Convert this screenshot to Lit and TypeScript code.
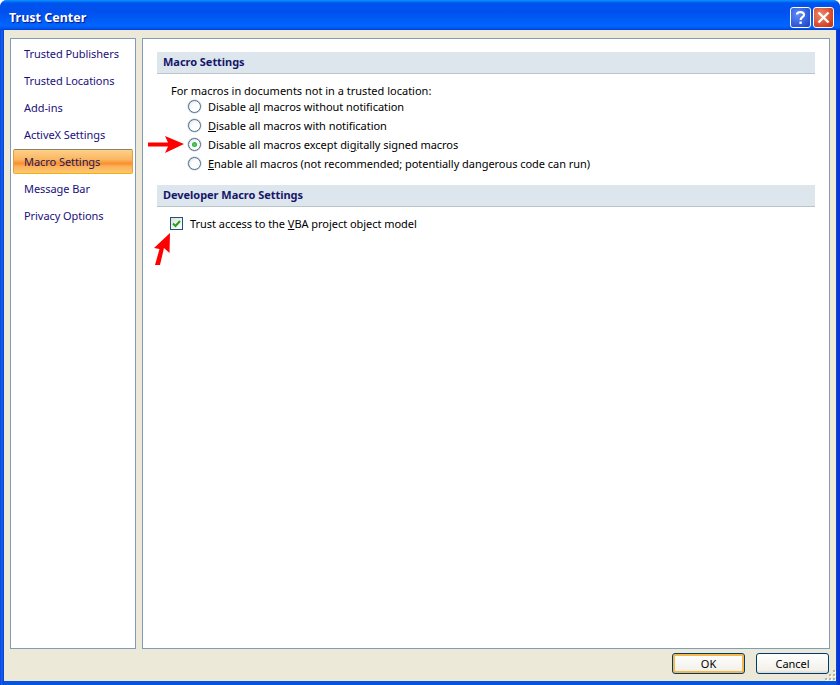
import { LitElement, html, css } from "lit";
import { customElement } from "lit/decorators.js";

const nav = ["Trusted Publishers", "Trusted Locations", "Add-ins", "ActiveX Settings", "Macro Settings", "Message Bar", "Privacy Options"];

@customElement("app-root")
export class AppRoot extends LitElement {
  static styles = css`
    :host { display: block; width: 840px; height: 685px; font-family: "Noto Sans", "DejaVu Sans", sans-serif; font-size: 11px; letter-spacing: -0.04px; color: #000; overflow: hidden; background: #fff; }
    .window { position: relative; width: 840px; height: 685px; box-sizing: border-box; display: flex; flex-direction: column; border-radius: 7px 7px 0 0; overflow: hidden;
      background: linear-gradient(90deg, #0831d9 0, #1660ee 1px, #0855dd 3px, #0a3bd0 4px, #0855dd 4px, #0855dd 836px, #0a3bd0 837px, #0831d9 840px); }
    .title { height: 30px; flex: none; box-sizing: border-box; display: flex; align-items: center; padding: 5px 6px 0 9px; gap: 2px;
      background: linear-gradient(180deg, #0997ff 0%, #0053ee 10%, #0050ee 40%, #0066ff 86%, #0058ee 94%, #003dd7 100%); }
    .title-text { flex: 1; color: #fff; font: bold 12.5px "Noto Sans", sans-serif; text-shadow: 1px 1px 1px #0f1089; letter-spacing: 0; }
    .cap { width: 21px; height: 21px; box-sizing: border-box; border: 1px solid #fff; border-radius: 3px; display: block; }
    .help { background: radial-gradient(circle at 35% 35%, #5f8cf5, #2a56d8 70%, #1c3fb4); }
    .close { background: radial-gradient(circle at 35% 35%, #ed8a6c, #d9482a 65%, #b5300f); }
    .body { flex: 1; margin: 0 4px 4px; background: #ece9d8; display: flex; flex-direction: column; padding: 8px 6px 0; min-height: 0; }
    .panels { display: flex; gap: 6px; height: 611px; flex: none; }
    .panel { background: #fff; border: 1px solid #7f9db9; box-sizing: border-box; }
    .left { width: 126px; padding-top: 1px; display: flex; flex-direction: column; }
    .nav { height: 27px; box-sizing: border-box; display: flex; align-items: center; padding-left: 11px; color: #1a0f7c; margin: 0 2px; white-space: nowrap; letter-spacing: -0.06px; }
    .nav.sel { color: #22185c; border: 1px solid; border-color: #8c8465 #e0a040 #f5b000; border-radius: 2px; height: 25px; margin: 1px 2px; padding-left: 10px;
      background: linear-gradient(180deg, #fdd08a 0%, #fbb560 42%, #f8902e 58%, #fcb158 72%, #fdc878 100%); }
    .right { flex: 1; padding: 13px 14px 0; }
    .sec { height: 22px; box-sizing: border-box; background: #dde6ec; border-bottom: 1px solid #b9c4cb; color: #15166b; font-weight: 700; padding: 0 0 2px 6px; display: flex; align-items: center; }
    .intro { margin: 9px 0 0 14px; height: 15px; line-height: 15px; letter-spacing: 0; }
    .opts { display: flex; flex-direction: column; margin: -1px 0 0 31px; }
    .opt { height: 19px; display: flex; align-items: center; gap: 7px; white-space: nowrap; }
    u { text-underline-offset: 1px; }
    .radio { width: 13px; height: 13px; flex: none; border-radius: 50%; box-sizing: border-box; border: 1px solid #4f6f8a; background: radial-gradient(circle at 65% 65%, #fff 40%, #d8dfe6 100%); display: flex; align-items: center; justify-content: center; box-shadow: 0 0 0 .5px #b8c6d2; }
    .dot { width: 5px; height: 5px; border-radius: 50%; background: radial-gradient(circle, #5fd25f, #1b9a2c); }
    .sec2 { margin-top: 12px; }
    .check-row { display: flex; align-items: center; gap: 7px; margin: 9px 0 0 13px; height: 15px; white-space: nowrap; }
    .check { width: 13px; height: 13px; flex: none; box-sizing: border-box; border: 1px solid #1c5180; background: linear-gradient(135deg, #e0e0d6, #fff); display: block; }
    .footer { flex: 1; display: flex; justify-content: flex-end; gap: 11px; padding: 4px 1px 0 0; position: relative; }
    .btn { width: 73px; height: 21px; box-sizing: border-box; border: 1px solid #003c74; border-radius: 3px; background: linear-gradient(180deg, #fff, #f2f1ea 85%, #dcd8cc); font: inherit; color: #000; padding: 0; display: flex; align-items: center; justify-content: center; }
    .btn.def { box-shadow: inset 0 0 0 2px #f5b84a; }
    .grip { position: absolute; right: -6px; bottom: 0; width: 12px; height: 12px; display: block; }
    .arrow { position: absolute; display: block; }
    .a1 { left: 148px; top: 135px; }
    .a2 { left: 153px; top: 232px; }
  `;

  render() {
    return html`<div class="window">
      <div class="title">
        <div class="title-text">Trust Center</div>
        <svg class="cap help" viewBox="0 0 19 19"><path d="M6 6.5 C6 3.5 13 3 13 6.8 C13 9.3 9.6 9.2 9.6 12" fill="none" stroke="#fff" stroke-width="2.2"/><rect x="8.4" y="13.5" width="2.4" height="2.4" fill="#fff"/></svg>
        <svg class="cap close" viewBox="0 0 19 19"><path d="M4.5 4.5 L14.5 14.5 M14.5 4.5 L4.5 14.5" stroke="#fff" stroke-width="2.4"/></svg>
      </div>
      <div class="body">
        <div class="panels">
          <div class="panel left">
            ${nav.map((n) => html`<div class="nav ${n === "Macro Settings" ? "sel" : ""}">${n}</div>`)}
          </div>
          <div class="panel right">
            <div class="sec">Macro Settings</div>
            <div class="intro">For macros in documents not in a trusted location:</div>
            <div class="opts">
              <div class="opt"><span class="radio"></span><span>Disable a<u>l</u>l macros without notification</span></div>
              <div class="opt"><span class="radio"></span><span><u>D</u>isable all macros with notification</span></div>
              <div class="opt"><span class="radio"><span class="dot"></span></span><span>Disable all macros except di<u>g</u>itally signed macros</span></div>
              <div class="opt"><span class="radio"></span><span><u>E</u>nable all macros (not recommended; potentially dangerous code can run)</span></div>
            </div>
            <div class="sec sec2">Developer Macro Settings</div>
            <div class="check-row">
              <svg class="check" viewBox="0 0 11 11"><path d="M2 5.5 L4.5 8 L9 3" fill="none" stroke="#21a121" stroke-width="2"/></svg>
              <span>Trust access to the <u>V</u>BA project object model</span>
            </div>
          </div>
        </div>
        <div class="footer">
          <div class="btn def">OK</div>
          <div class="btn">Cancel</div>
          <svg class="grip" viewBox="0 0 12 12">
            <path fill="#fff" d="M10 2h2v2h-2zM6 6h2v2h-2zM10 6h2v2h-2zM2 10h2v2h-2zM6 10h2v2h-2zM10 10h2v2h-2z"/>
            <path fill="#b8b5a3" d="M9 1h2v2h-2zM5 5h2v2h-2zM9 5h2v2h-2zM1 9h2v2h-2zM5 9h2v2h-2zM9 9h2v2h-2z"/>
          </svg>
        </div>
      </div>
      <svg class="arrow a1" width="37" height="19" viewBox="0 0 37 19"><path d="M0 7.5 L20 7.5 L17 1 L36 9 L17 18 L20 11.5 L0 11.5 Z" fill="#f00"/></svg>
      <svg class="arrow a2" width="18" height="34" viewBox="0 0 18 34"><path d="M17 1 L16.5 21 L11 16 L7 33 L2 33 L6.5 17 L1 16 Z" fill="#f00"/></svg>
    </div>`;
  }
}
